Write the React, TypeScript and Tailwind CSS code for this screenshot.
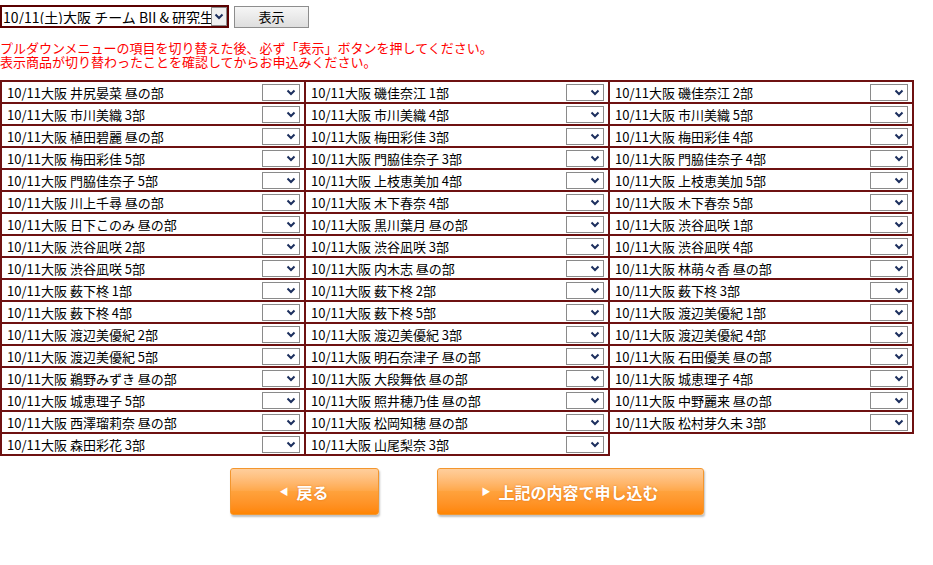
import React from 'react';

const FONT = { fontFamily: '"Noto Sans CJK JP", "Noto Sans", sans-serif' };

const COL1 = [
  '井尻晏菜 昼の部', '市川美織 3部', '植田碧麗 昼の部', '梅田彩佳 5部', '門脇佳奈子 5部',
  '川上千尋 昼の部', '日下このみ 昼の部', '渋谷凪咲 2部', '渋谷凪咲 5部', '薮下柊 1部',
  '薮下柊 4部', '渡辺美優紀 2部', '渡辺美優紀 5部', '鵜野みずき 昼の部', '城恵理子 5部',
  '西澤瑠莉奈 昼の部', '森田彩花 3部',
];
const COL2 = [
  '磯佳奈江 1部', '市川美織 4部', '梅田彩佳 3部', '門脇佳奈子 3部', '上枝恵美加 4部',
  '木下春奈 4部', '黒川葉月 昼の部', '渋谷凪咲 3部', '内木志 昼の部', '薮下柊 2部',
  '薮下柊 5部', '渡辺美優紀 3部', '明石奈津子 昼の部', '大段舞依 昼の部', '照井穂乃佳 昼の部',
  '松岡知穂 昼の部', '山尾梨奈 3部',
];
const COL3 = [
  '磯佳奈江 2部', '市川美織 5部', '梅田彩佳 4部', '門脇佳奈子 4部', '上枝恵美加 5部',
  '木下春奈 5部', '渋谷凪咲 1部', '渋谷凪咲 4部', '林萌々香 昼の部', '薮下柊 3部',
  '渡辺美優紀 1部', '渡辺美優紀 4部', '石田優美 昼の部', '城恵理子 4部', '中野麗来 昼の部',
  '松村芽久未 3部',
];

function Chevron() {
  return (
    <svg width="10" height="7" viewBox="0 0 10 7">
      <path d="M1.5 1.5 L5 5 L8.5 1.5" fill="none" stroke="#1c2f5e" strokeWidth="2" />
    </svg>
  );
}

function QtySelect() {
  return (
    <div className="flex h-[17px] w-[38px] items-center justify-end border border-[#8a8a8a] bg-white pr-[3px]">
      <Chevron />
    </div>
  );
}

function Cell({ name }: { name: string }) {
  return (
    <td className="h-[22px] w-[304px] border-2 border-[#6e1111] p-0">
      <div className="flex items-center justify-between pl-[5px] pr-[4px]">
        <span className="text-[13px] leading-none text-black">10/11大阪 {name}</span>
        <QtySelect />
      </div>
    </td>
  );
}

function OrangeButton({ label, dir, width }: { label: string; dir: 'left' | 'right'; width: string }) {
  return (
    <button
      className={`relative flex h-[47px] ${width} items-center justify-center gap-[8px] overflow-hidden rounded-[3px] border border-[#f3962e] bg-gradient-to-b from-[#ffc68a] via-[#ffa23c] to-[#ff8500] text-[16px] font-bold text-white shadow-[1px_2px_2px_rgba(0,0,0,0.25)]`}
    >
      <span className="absolute left-0 right-0 top-0 h-[22px] bg-gradient-to-b from-[rgba(255,255,255,0.15)] to-[rgba(255,255,255,0.05)]" />
      <span className="relative text-[9px]">{dir === 'left' ? '◀' : '▶'}</span>
      <span className="relative [text-shadow:0_0_2px_rgba(200,90,0,0.6)]">{label}</span>
    </button>
  );
}

export default function App() {
  return (
    <div className="min-h-[565px] w-[933px] bg-white pt-[5px]" style={FONT}>
      {/* Event selector */}
      <div className="flex items-center gap-[5px]">
        <div className="flex h-[23px] w-[229px] items-center border-2 border-[#5a0000] bg-white">
          <span className="flex-1 overflow-hidden whitespace-nowrap pl-[1px] text-[14px] leading-none text-black">
            10/11(土)大阪 チーム BII & 研究生
          </span>
          <div className="flex h-[19px] w-[16px] shrink-0 items-center justify-center border border-[#8a8a8a] bg-[#f0f0f0]">
            <Chevron />
          </div>
        </div>
        <button className="h-[22px] w-[75px] border border-[#8d8d8d] bg-gradient-to-b from-[#f6f6f6] to-[#dedede] text-[13px] leading-none text-black">
          表示
        </button>
      </div>

      {/* Notice */}
      <div className="mt-[13px] flex flex-col text-[13px] leading-[14px] text-[#ff0000]">
        <p className="h-[14px]">プルダウンメニューの項目を切り替えた後、必ず「表示」ボタンを押してください。</p>
        <p className="h-[14px]">表示商品が切り替わったことを確認してからお申込みください。</p>
      </div>

      {/* Product table */}
      <table className="mt-[11px] border-collapse">
        <tbody>
          {COL1.map((n, i) => (
            <tr key={i}>
              <Cell name={n} />
              <Cell name={COL2[i]} />
              {COL3[i] && <Cell name={COL3[i]} />}
            </tr>
          ))}
        </tbody>
      </table>

      {/* Actions */}
      <div className="mt-[12px] flex justify-center gap-[58px]">
        <OrangeButton label="戻る" dir="left" width="w-[149px]" />
        <OrangeButton label="上記の内容で申し込む" dir="right" width="w-[267px]" />
      </div>
    </div>
  );
}
